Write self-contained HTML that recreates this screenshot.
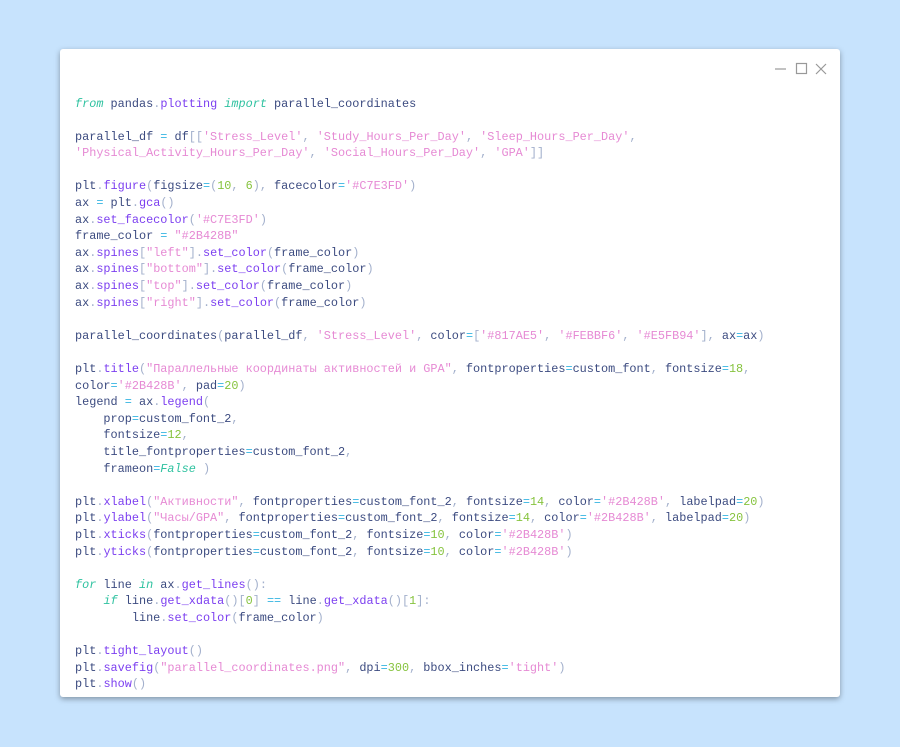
<!DOCTYPE html>
<html><head><meta charset="utf-8"><style>
body{margin:0;width:900px;height:747px;background:#c7e3fd;position:relative;overflow:hidden}
.win{position:absolute;left:60px;top:49px;width:780px;height:648px;background:#fff;border-radius:3px;box-shadow:0 2px 6px rgba(0,0,0,.35)}
pre{position:absolute;left:75px;top:95.5px;margin:0;font-family:"Liberation Mono",monospace;font-size:11.85px;line-height:16.6px;color:#3c4b80}
.p{color:#a3b0cc}.f{color:#7c3ff0}.k{color:#2fc2a0;font-style:italic}.s{color:#e68ad4}.n{color:#86c33e}.o{color:#36b5e2}
.ctl{position:absolute;top:62px}
</style></head><body>
<div class="win"></div>
<svg class="ctl" style="left:770px" width="60" height="14" viewBox="0 0 60 14"><line x1="5" y1="7" x2="16" y2="7" stroke="#999" stroke-width="1.2"/><rect x="26.5" y="1.5" width="10" height="10" fill="none" stroke="#999" stroke-width="1.2"/><path d="M46 2L56 12M56 2L46 12" stroke="#999" stroke-width="1.2"/></svg>
<pre><span class="k">from</span> pandas<span class="p">.</span><span class="f">plotting</span> <span class="k">import</span> parallel_coordinates

parallel_df <span class="o">=</span> df<span class="p">[[</span><span class="s">'Stress_Level'</span><span class="p">,</span> <span class="s">'Study_Hours_Per_Day'</span><span class="p">,</span> <span class="s">'Sleep_Hours_Per_Day'</span><span class="p">,</span>
<span class="s">'Physical_Activity_Hours_Per_Day'</span><span class="p">,</span> <span class="s">'Social_Hours_Per_Day'</span><span class="p">,</span> <span class="s">'GPA'</span><span class="p">]]</span>

plt<span class="p">.</span><span class="f">figure</span><span class="p">(</span>figsize<span class="o">=</span><span class="p">(</span><span class="n">10</span><span class="p">,</span> <span class="n">6</span><span class="p">),</span> facecolor<span class="o">=</span><span class="s">'#C7E3FD'</span><span class="p">)</span>
ax <span class="o">=</span> plt<span class="p">.</span><span class="f">gca</span><span class="p">()</span>
ax<span class="p">.</span><span class="f">set_facecolor</span><span class="p">(</span><span class="s">'#C7E3FD'</span><span class="p">)</span>
frame_color <span class="o">=</span> <span class="s">"#2B428B"</span>
ax<span class="p">.</span><span class="f">spines</span><span class="p">[</span><span class="s">"left"</span><span class="p">].</span><span class="f">set_color</span><span class="p">(</span>frame_color<span class="p">)</span>
ax<span class="p">.</span><span class="f">spines</span><span class="p">[</span><span class="s">"bottom"</span><span class="p">].</span><span class="f">set_color</span><span class="p">(</span>frame_color<span class="p">)</span>
ax<span class="p">.</span><span class="f">spines</span><span class="p">[</span><span class="s">"top"</span><span class="p">].</span><span class="f">set_color</span><span class="p">(</span>frame_color<span class="p">)</span>
ax<span class="p">.</span><span class="f">spines</span><span class="p">[</span><span class="s">"right"</span><span class="p">].</span><span class="f">set_color</span><span class="p">(</span>frame_color<span class="p">)</span>

parallel_coordinates<span class="p">(</span>parallel_df<span class="p">,</span> <span class="s">'Stress_Level'</span><span class="p">,</span> color<span class="o">=</span><span class="p">[</span><span class="s">'#817AE5'</span><span class="p">,</span> <span class="s">'#FEBBF6'</span><span class="p">,</span> <span class="s">'#E5FB94'</span><span class="p">],</span> ax<span class="o">=</span>ax<span class="p">)</span>

plt<span class="p">.</span><span class="f">title</span><span class="p">(</span><span class="s">"Параллельные координаты активностей и GPA"</span><span class="p">,</span> fontproperties<span class="o">=</span>custom_font<span class="p">,</span> fontsize<span class="o">=</span><span class="n">18</span><span class="p">,</span>
color<span class="o">=</span><span class="s">'#2B428B'</span><span class="p">,</span> pad<span class="o">=</span><span class="n">20</span><span class="p">)</span>
legend <span class="o">=</span> ax<span class="p">.</span><span class="f">legend</span><span class="p">(</span>
    prop<span class="o">=</span>custom_font_2<span class="p">,</span>
    fontsize<span class="o">=</span><span class="n">12</span><span class="p">,</span>
    title_fontproperties<span class="o">=</span>custom_font_2<span class="p">,</span>
    frameon<span class="o">=</span><span class="k">False</span> <span class="p">)</span>

plt<span class="p">.</span><span class="f">xlabel</span><span class="p">(</span><span class="s">"Активности"</span><span class="p">,</span> fontproperties<span class="o">=</span>custom_font_2<span class="p">,</span> fontsize<span class="o">=</span><span class="n">14</span><span class="p">,</span> color<span class="o">=</span><span class="s">'#2B428B'</span><span class="p">,</span> labelpad<span class="o">=</span><span class="n">20</span><span class="p">)</span>
plt<span class="p">.</span><span class="f">ylabel</span><span class="p">(</span><span class="s">"Часы/GPA"</span><span class="p">,</span> fontproperties<span class="o">=</span>custom_font_2<span class="p">,</span> fontsize<span class="o">=</span><span class="n">14</span><span class="p">,</span> color<span class="o">=</span><span class="s">'#2B428B'</span><span class="p">,</span> labelpad<span class="o">=</span><span class="n">20</span><span class="p">)</span>
plt<span class="p">.</span><span class="f">xticks</span><span class="p">(</span>fontproperties<span class="o">=</span>custom_font_2<span class="p">,</span> fontsize<span class="o">=</span><span class="n">10</span><span class="p">,</span> color<span class="o">=</span><span class="s">'#2B428B'</span><span class="p">)</span>
plt<span class="p">.</span><span class="f">yticks</span><span class="p">(</span>fontproperties<span class="o">=</span>custom_font_2<span class="p">,</span> fontsize<span class="o">=</span><span class="n">10</span><span class="p">,</span> color<span class="o">=</span><span class="s">'#2B428B'</span><span class="p">)</span>

<span class="k">for</span> line <span class="k">in</span> ax<span class="p">.</span><span class="f">get_lines</span><span class="p">():</span>
    <span class="k">if</span> line<span class="p">.</span><span class="f">get_xdata</span><span class="p">()[</span><span class="n">0</span><span class="p">]</span> <span class="o">==</span> line<span class="p">.</span><span class="f">get_xdata</span><span class="p">()[</span><span class="n">1</span><span class="p">]:</span>
        line<span class="p">.</span><span class="f">set_color</span><span class="p">(</span>frame_color<span class="p">)</span>

plt<span class="p">.</span><span class="f">tight_layout</span><span class="p">()</span>
plt<span class="p">.</span><span class="f">savefig</span><span class="p">(</span><span class="s">"parallel_coordinates.png"</span><span class="p">,</span> dpi<span class="o">=</span><span class="n">300</span><span class="p">,</span> bbox_inches<span class="o">=</span><span class="s">'tight'</span><span class="p">)</span>
plt<span class="p">.</span><span class="f">show</span><span class="p">()</span></pre>
</body></html>
